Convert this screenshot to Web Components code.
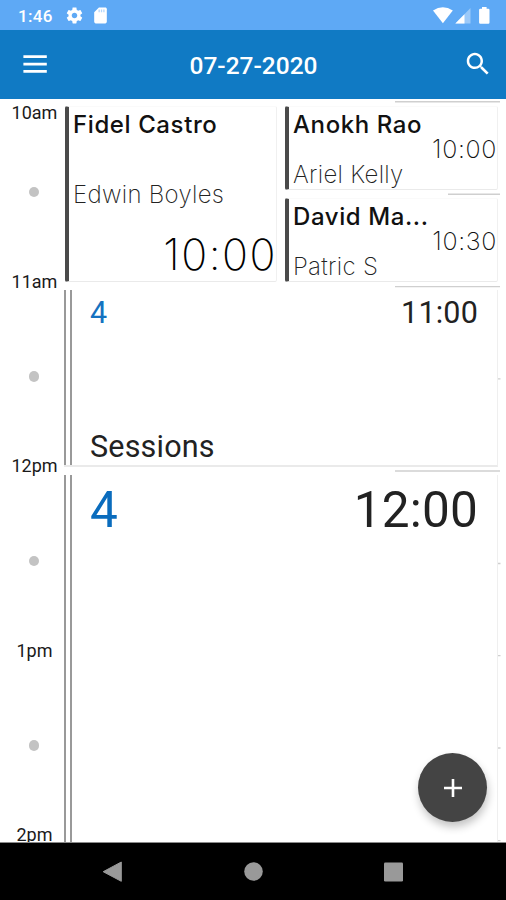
<!DOCTYPE html>
<html lang="en">
<head>
<meta charset="utf-8">
<title>Day schedule</title>
<style>
html, body { margin: 0; height: 100%; overflow: hidden; background: #fff; }
body { font-family: Roboto, sans-serif; color: #1c1c1c; }
</style>
</head>
<body>
<schedule-app></schedule-app>
<script>
const define = (name, html, setup) => {
  const template = document.createElement('template');
  template.innerHTML = html;
  customElements.define(name, class extends HTMLElement {
    constructor() {
      super();
      this.attachShadow({ mode: 'open' }).append(template.content.cloneNode(true));
    }
    connectedCallback() { if (setup) setup(this, this.shadowRoot); }
  });
};

define('status-bar', `
<style>
:host { display: flex; justify-content: space-between; height: 30px; background: #5ea9f5; color: #fff; box-sizing: border-box; padding: 0 16px 0 18px; }
div { display: flex; }
span { font: 500 17px/32px Roboto, sans-serif; letter-spacing: .3px; width: 46.500px; }
svg { display: block; fill: #fff; }
.gear { margin: 6px 7.800px 0 0; }
.sd { margin-top: 6.200px; }
</style>
<div>
  <span>1:46</span>
  <svg class="gear" width="19" height="19" viewBox="0 0 24 24"><path d="M19.43 12.98c.04-.32.07-.64.07-.98s-.03-.66-.07-.98l2.11-1.65c.19-.15.24-.42.12-.64l-2-3.46c-.12-.22-.39-.3-.61-.22l-2.49 1c-.52-.4-1.08-.73-1.69-.98l-.38-2.65C14.46 2.18 14.25 2 14 2h-4c-.25 0-.46.18-.49.42l-.38 2.65c-.61.25-1.17.59-1.69.98l-2.49-1c-.23-.09-.49 0-.61.22l-2 3.46c-.13.22-.07.49.12.64l2.11 1.65c-.04.32-.07.65-.07.98s.03.66.07.98l-2.11 1.65c-.19.15-.24.42-.12.64l2 3.46c.12.22.39.3.61.22l2.49-1c.52.4 1.08.73 1.69.98l.38 2.65c.03.24.24.42.49.42h4c.25 0 .46-.18.49-.42l.38-2.65c.61-.25 1.17-.59 1.69-.98l2.49 1c.23.09.49 0 .61-.22l2-3.46c.12-.22.07-.49-.12-.64l-2.11-1.65zM12 15.5c-1.93 0-3.5-1.57-3.5-3.5s1.57-3.5 3.5-3.5 3.5 1.57 3.5 3.5-1.57 3.5-3.5 3.5z"/></svg>
  <svg class="sd" width="19" height="19" viewBox="0 0 24 24"><path d="M18 2h-8L4.020 8 4 20c0 1.100.9 2 2 2h12c1.100 0 2-.9 2-2V4c0-1.100-.9-2-2-2z"/><path fill="#b3d6fb" d="M9.500 4.500h1.600v3.300H9.500zM12.500 4.500h1.600v3.300h-1.600zM15.500 4.500h1.600v3.300h-1.600z"/></svg>
</div>
<svg width="58" height="30" viewBox="432 0 58 30">
  <path d="M433 10.500Q442.900 4.200 452.800 10.500L442.900 23.300Z"/>
  <path d="M470.500 8V23.500H455.300Z" opacity=".38"/><path d="M464.500 14.200V23.500H455.300Z"/>
  <path d="M482 7h4.600v1.800h1.700q1.200 0 1.200 1.200v12.500q0 1.200-1.200 1.200h-8q-1.200 0-1.200-1.200V10q0-1.200 1.200-1.200H482z"/>
</svg>`);

define('app-bar', `
<style>
:host { display: grid; grid-template-columns: 48px 1fr 48px; align-items: center; height: 68.700px; background: #107ac4; box-sizing: border-box; padding: 1px 0 0; color: #fff; }
h1 { margin: 0; padding-top: 2px; text-align: center; font: 500 24.500px/30px Roboto, sans-serif; letter-spacing: 0; text-indent: 1px; }
svg { display: block; }
.menu { margin: 0 0 1.500px 23px; }
.search { margin: 0 0 1px 4.700px; }
</style>
<svg class="menu" width="24" height="20" viewBox="0 0 24 20" fill="#fff"><path d="M.4 1.300h23.400v2.700H.4zM.4 8.700h23.400v2.700H.4zM.4 16h23.400v2.700H.4z"/></svg>
<h1><slot></slot></h1>
<svg class="search" width="30" height="30" viewBox="0 0 24 24" fill="#fff"><path d="M15.500 14h-.79l-.28-.27C15.410 12.590 16 11.110 16 9.500 16 5.910 13.090 3 9.500 3S3 5.910 3 9.500 5.910 16 9.500 16c1.610 0 3.090-.59 4.230-1.570l.27.28v.79l5 4.990L20.490 19l-4.990-5zm-6 0C7.010 14 5 11.990 5 9.500S7.010 5 9.500 5 14 7.010 14 9.500 11.990 14 9.500 14z"/></svg>`);

define('hour-mark', `
<style>
:host { display: flex; flex-direction: column; align-items: center; justify-content: space-between; height: 184.500px; padding-bottom: 74.800px; box-sizing: border-box; flex: none; }
:host([first]) { height: 168.900px; }
span { font: 400 18px/20px Roboto, sans-serif; color: #1a1a1a; }
i { width: 10.500px; height: 10.500px; border-radius: 50%; background: #c3c3c3; margin-right: .6px; }
</style>
<span><slot></slot></span><i></i>`);

define('session-card', `
<style>
:host { display: flex; flex-direction: column; justify-content: space-between; box-sizing: border-box; background: #fff; border-left: 4px solid #4a4a4a; border-right: 1.500px solid #f0f0f0; border-bottom: 1.500px solid #eaeaea; border-top: 1px solid #fafafa; border-radius: 2px; font-family: Inter, sans-serif; padding: 0 0 0 4px; min-height: 0; }
div { white-space: nowrap; }
.name { font-size: 24px; font-weight: 500; letter-spacing: .6px; line-height: 28px; margin-top: 4px; color: #111; }
.guest { font-size: 24px; font-weight: 200; letter-spacing: .3px; line-height: 28px; color: #222; }
.time { font-size: 25px; font-weight: 200; letter-spacing: .65px; line-height: 28px; text-align: right; color: #111; }
:host([size=small]) .time { margin: -8px 0 -6px; }
:host([size=large]) .guest { margin-top: 42px; }
:host([size=large]) .time { order: 3; font-size: 43px; letter-spacing: 1.500px; line-height: 46px; margin-top: auto; padding-bottom: 4px; margin-right: -1px; color: #000; }
</style>
<div class="name"></div><div class="time"></div><div class="guest"></div>`,
(el, root) => {
  for (const key of ['name', 'time', 'guest']) root.querySelector('.' + key).textContent = el.getAttribute(key);
});

define('session-group', `
<style>
:host { display: flex; flex-direction: column; justify-content: space-between; box-sizing: border-box; background: linear-gradient(#999,#999) 0 0/2px 100% no-repeat, linear-gradient(#999,#999) 5.500px 0/2px 100% no-repeat, #fff; border-right: 1.500px solid #efefef; border-bottom: 2px solid #eaeaea; padding: 5px 19px 0 26px; font: 400 30.500px/36px Roboto, sans-serif; letter-spacing: .2px; color: #222; }
header { display: flex; justify-content: space-between; }
b { font-weight: 400; color: #1572c0; }
:host([large]) { padding-top: 4px; }
:host([large]) header { font-size: 49.500px; line-height: 63px; }
:host([large]) b { color: #0a6cbd; }
</style>
<header><b></b><span></span></header><footer><slot></slot></footer>`,
(el, root) => {
  root.querySelector('b').textContent = el.getAttribute('count');
  root.querySelector('span').textContent = el.getAttribute('time');
});

define('day-timeline', `
<style>
:host { display: grid; grid-template-columns: 64px 434px 1fr; position: relative; overflow: hidden; min-height: 0; background: #fff; }
aside { padding: 4.400px 0 0 5px; display: flex; flex-direction: column; min-height: 0; }
.lines { position: absolute; inset: 0; }
.events { position: relative; display: flex; flex-direction: column; gap: 8px; padding-top: 7.300px; min-height: 0; }
.row { display: grid; grid-template-columns: 213px 213px; gap: 8px; height: 176.500px; flex: none; }
.stack { display: grid; grid-template-rows: 1fr 1fr; gap: 8.500px; }
.row > session-card { margin-left: 1px; }
.mid { height: 177px; flex: none; }
.long { height: 400px; flex: none; }
</style>
<svg class="lines" width="506" height="744" viewBox="0 98.700 506 744" stroke="#cfcfcf" stroke-width="1.400"><path d="M395 101.500H500M448 194H500M395 286.300H500M395 470.700H500M498 378.600H500.500M498 563.200H500.500M498 655.300H500.500M498 747.700H500.500M498 840.300H500.500"/></svg>
<aside><hour-mark first>10am</hour-mark><hour-mark>11am</hour-mark><hour-mark>12pm</hour-mark><hour-mark>1pm</hour-mark><hour-mark>2pm</hour-mark></aside>
<section class="events">
  <div class="row">
    <session-card size="large" name="Fidel Castro" guest="Edwin Boyles" time="10:00"></session-card>
    <div class="stack">
      <session-card size="small" name="Anokh Rao" guest="Ariel Kelly" time="10:00"></session-card>
      <session-card size="small" name="David Ma..." guest="Patric S" time="10:30"></session-card>
    </div>
  </div>
  <session-group class="mid" count="4" time="11:00">Sessions</session-group>
  <session-group class="long" large count="4" time="12:00"></session-group>
</section>`);

define('add-button', `
<style>
:host { display: grid; place-items: center; width: 69px; height: 69px; border-radius: 50%; background: #444; box-shadow: 1px 5px 9px rgba(0,0,0,.24); }
</style>
<svg width="18" height="18" viewBox="0 0 18 18" stroke="#fff" stroke-width="2.600"><path d="M9 0V18M0 9H18"/></svg>`);

define('nav-bar', `
<style>
:host { display: block; height: 58.500px; background: #000; border-top: 1px solid #8a8a8a; box-sizing: border-box; }
svg { display: block; }
</style>
<svg width="506" height="57" viewBox="0 842.500 506 57" fill="#999"><path d="M121.300 861.500V880.800L103.200 871.200Z" stroke="#999" stroke-linejoin="round"/><circle cx="253.500" cy="871" r="9.300"/><rect x="384" y="862" width="19" height="19" rx="1.300"/></svg>`);

define('schedule-app', `
<style>
:host { display: grid; grid-template-rows: 30px 68.700px 1fr 58.500px; width: 506px; height: 900px; position: relative; overflow: hidden; }
add-button { position: absolute; left: 418px; top: 753px; }
</style>
<status-bar></status-bar><app-bar>07-27-2020</app-bar><day-timeline></day-timeline><nav-bar></nav-bar><add-button></add-button>`);
</script>
</body>
</html>
